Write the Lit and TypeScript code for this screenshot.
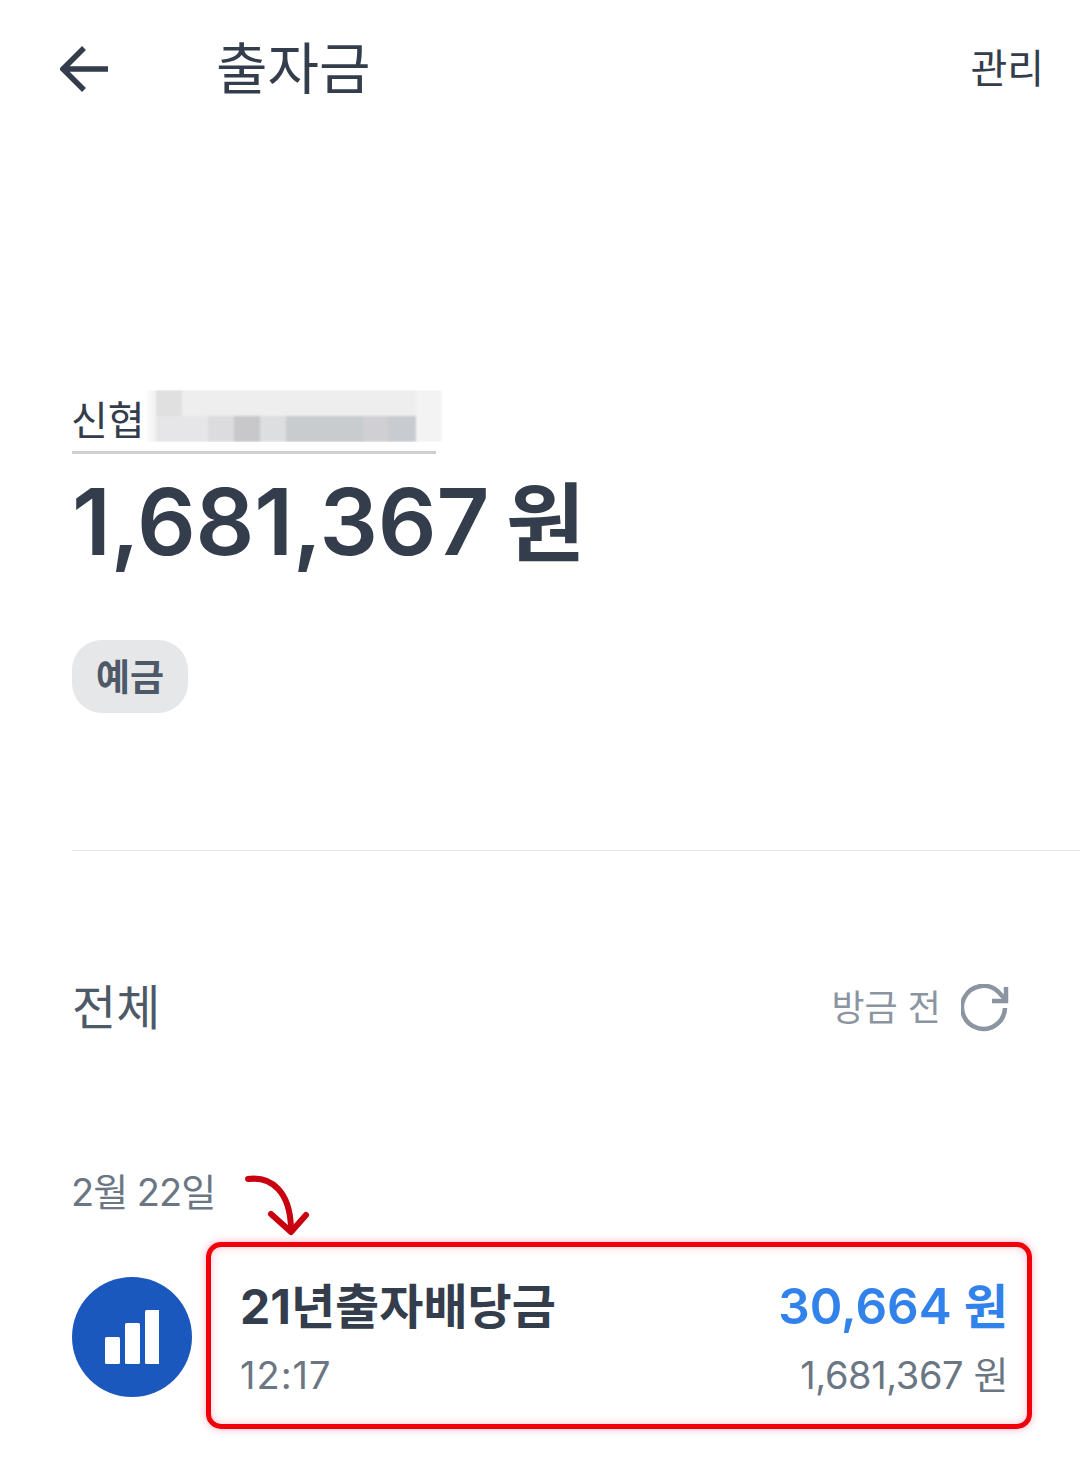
import { LitElement, html, css } from "lit";
import { customElement } from "lit/decorators.js";

const MOSAIC: Array<[number, number, number, number, string]> = [
  [8, 0, 26, 26, "#e0e0e1"],
  [8, 26, 52, 26, "#e6e6e8"],
  [60, 26, 26, 26, "#dcdcde"],
  [86, 26, 26, 26, "#c8c8cb"],
  [112, 26, 26, 26, "#dddee0"],
  [138, 26, 77, 26, "#c9ccce"],
  [215, 26, 25, 26, "#d0d0d4"],
  [240, 26, 28, 26, "#c8ccd0"],
  [268, 0, 26, 52, "#f3f3f4"],
];

@customElement("app-root")
export class AppRoot extends LitElement {
  static styles = css`
    :host {
      display: block;
      position: relative;
      width: 1080px;
      height: 1458px;
      background: #fff;
      overflow: hidden;
      font-family: Inter, "Noto Sans CJK KR", sans-serif;
      color: #333d4b;
    }
    .header {
      display: flex;
      align-items: center;
      height: 138px;
      padding: 0 36px 0 60px;
    }
    .back { width: 50px; height: 50px; flex: none; }
    .title {
      margin-left: 106px;
      font-size: 56px;
      line-height: 1;
      flex: 1;
    }
    .manage { font-size: 40px; line-height: 1; }
    .account {
      padding: 252px 0 0 72px;
      position: relative;
    }
    .bank {
      width: 364px;
      height: 64px;
      box-sizing: border-box;
      border-bottom: 3px solid #cfd0d2;
      font-size: 40px;
      line-height: 62px;
      text-indent: -1px;
      position: relative;
    }
    .mask {
      position: absolute;
      left: 72px;
      top: 0;
      width: 298px;
      height: 52px;
      background: #eeeeef;
      overflow: hidden;
      filter: blur(1px);
      -webkit-mask-image: linear-gradient(90deg, transparent 0, #000 14px);
      mask-image: linear-gradient(90deg, transparent 0, #000 14px);
    }
    .cell { position: absolute; margin-left: 4px; }
    .balance {
      margin-top: 12px;
      font-size: 92px;
      line-height: 112px;
      font-weight: 600;
      letter-spacing: -0.3px;
      white-space: nowrap;
    }
    .balance .unit { font-size: 86px; letter-spacing: 0; margin-left: -6px; }
    .tag {
      display: inline-flex;
      align-items: center;
      justify-content: center;
      box-sizing: border-box;
      width: 116px;
      height: 73px;
      padding-bottom: 4px;
      margin-top: 60px;
      border-radius: 30px;
      background: #e5e7e9;
      color: #4e5968;
      font-size: 37px;
      font-weight: 700;
    }
    .divider {
      margin: 137px 0 0 72px;
      height: 1px;
      background: #e2e4e7;
    }
    .all {
      display: flex;
      align-items: center;
      height: 66px;
      margin-top: 124px;
      padding: 0 71px 0 72px;
    }
    .all-label { flex: 1; font-size: 48px; line-height: 1; color: #4e5968; }
    .all-time { font-size: 36px; color: #8b95a1; margin-right: 20px; line-height: 1; }
    .refresh { width: 48px; height: 48px; flex: none; }
    .date {
      margin: 127px 0 0 71px;
      font-size: 38px;
      line-height: 48px;
      letter-spacing: -1px;
      color: #6b7684;
    }
    .row {
      display: flex;
      align-items: center;
      margin-top: 58px;
      padding: 0 72px;
    }
    .avatar {
      width: 120px;
      height: 120px;
      border-radius: 50%;
      background: #1b58bd;
      flex: none;
      display: flex;
      align-items: center;
      justify-content: center;
    }
    .bars { width: 54px; height: 54px; display: block; }
    .details { flex: 1; margin-left: 48px; padding-top: 2px; }
    .line { display: flex; justify-content: space-between; align-items: center; }
    .name { font-size: 48px; font-weight: 700; line-height: 60px; }
    .amount { font-size: 48px; font-weight: 600; line-height: 60px; color: #3182ea; }
    .amount .num { font-size: 49.500px; }
    .sub { font-size: 38px; line-height: 48px; margin-top: 14px; color: #6b7684; }
    .time { letter-spacing: 1px; }
    .total { letter-spacing: -0.4px; }
    .hl {
      position: absolute;
      left: 206px;
      top: 1242px;
      width: 826px;
      height: 187px;
      box-sizing: border-box;
      border: 5px solid #f00008;
      border-radius: 15px;
      box-shadow: 0 0 8px rgba(240, 0, 60, 0.3), inset 0 0 10px rgba(240, 0, 60, 0.22);
    }
    .arrow { position: absolute; left: 240px; top: 1170px; width: 76px; height: 70px; }
  `;

  render() {
    return html`
      <div class="header">
        <svg class="back" viewBox="0 0 50 50" fill="none" stroke="#333d4b" stroke-width="5.500">
          <path d="M48 25H3M24 4L3 25l21 21"/>
        </svg>
        <div class="title">출자금</div>
        <div class="manage">관리</div>
      </div>
      <div class="account">
        <div class="bank">신협
          <div class="mask">
            ${MOSAIC.map(
              ([l, t, w, h, c]) =>
                html`<div class="cell" style="left:${l}px;top:${t}px;width:${w}px;height:${h}px;background:${c}"></div>`
            )}
          </div>
        </div>
        <div class="balance">1,681,367 <span class="unit">원</span></div>
        <div class="tag">예금</div>
      </div>
      <div class="divider"></div>
      <div class="all">
        <div class="all-label">전체</div>
        <div class="all-time">방금 전</div>
        <svg class="refresh" viewBox="0 0 48 48" fill="none" stroke="#8b95a1" stroke-width="4.500">
          <path d="M44 24A21.500 21.500 0 1 1 37 7.500L44 15"/>
          <path d="M45 3V17H31"/>
        </svg>
      </div>
      <div class="date">2월 22일</div>
      <div class="row">
        <div class="avatar">
          <svg class="bars" viewBox="0 0 54 54" fill="#fff">
            <rect x="0" y="27" width="15" height="27" rx="1.500"/>
            <rect x="20" y="13" width="15" height="41" rx="1.500"/>
            <rect x="40" y="0" width="15" height="54" rx="1.500"/>
          </svg>
        </div>
        <div class="details">
          <div class="line"><span class="name">21년출자배당금</span><span class="amount"><span class="num">30,664</span> 원</span></div>
          <div class="line sub"><span class="time">12:17</span><span class="total">1,681,367 원</span></div>
        </div>
      </div>
      <div class="hl"></div>
      <svg class="arrow" viewBox="0 0 76 70" fill="none" stroke="#c8000f" stroke-width="6" stroke-linecap="round" stroke-linejoin="round">
        <path d="M8 9C32 6 50 22 51 58"/>
        <path d="M31 44L51 62L66 45"/>
      </svg>
    `;
  }
}
